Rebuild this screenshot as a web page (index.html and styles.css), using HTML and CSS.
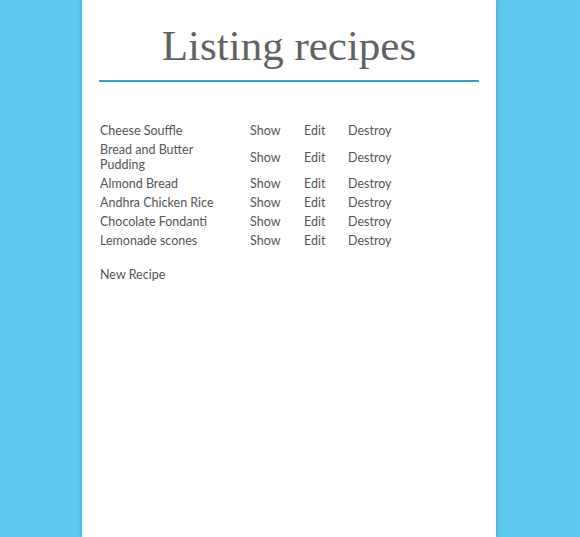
FILE: index.html
```html
<!DOCTYPE html>
<html>
<head>
<meta charset="utf-8">
<link rel="stylesheet" href="styles.css">
</head>
<body>
<div class="page">
  <h1 class="title">Listing recipes</h1>
  <table class="recipes">
    <tr><td class="name">Cheese Souffle</td><td class="act show">Show</td><td class="act edit">Edit</td><td class="act">Destroy</td></tr>
    <tr><td class="name">Bread and Butter Pudding</td><td class="act show">Show</td><td class="act edit">Edit</td><td class="act">Destroy</td></tr>
    <tr><td class="name">Almond Bread</td><td class="act show">Show</td><td class="act edit">Edit</td><td class="act">Destroy</td></tr>
    <tr><td class="name">Andhra Chicken Rice</td><td class="act show">Show</td><td class="act edit">Edit</td><td class="act">Destroy</td></tr>
    <tr><td class="name">Chocolate Fondanti</td><td class="act show">Show</td><td class="act edit">Edit</td><td class="act">Destroy</td></tr>
    <tr><td class="name">Lemonade scones</td><td class="act show">Show</td><td class="act edit">Edit</td><td class="act">Destroy</td></tr>
  </table>
  <p class="new"><a href="#">New Recipe</a></p>
</div>
</body>
</html>
```
FILE: styles.css
```css
html, body {
  margin: 0;
  padding: 0;
  height: 100%;
}
body {
  background: #5fc9f1;
  font-family: "Lato", "Noto Sans", sans-serif;
  color: #555;
  overflow: hidden;
}
.page {
  width: 380px;
  margin: 0 auto;
  padding: 0 17px;
  min-height: 100%;
  background: #fff;
  box-shadow: 0 0 4px rgba(40, 110, 150, 0.5);
  position: relative;
  left: -1px;
}
.title {
  margin: 0;
  padding: 22px 0 10px;
  font-family: "Liberation Serif", "DejaVu Serif", serif;
  font-weight: normal;
  font-size: 43px;
  line-height: 48px;
  color: #626262;
  text-align: center;
  border-bottom: 2px solid #3a9fc6;
}
.recipes {
  margin-top: 37px;
  border-spacing: 0 4px;
  font-size: 12.5px;
  line-height: 15px;
  margin-left: 1px;
}
.recipes td {
  padding: 0;
  vertical-align: middle;
}
.name {
  width: 118px;
  padding-right: 32px !important;
}
.show { width: 54px; }
.edit { width: 44px; }
.new {
  margin: 15px 0 0 1px;
  font-size: 12.5px;
  line-height: 15px;
}
.new a {
  color: #555;
  text-decoration: none;
}
```
